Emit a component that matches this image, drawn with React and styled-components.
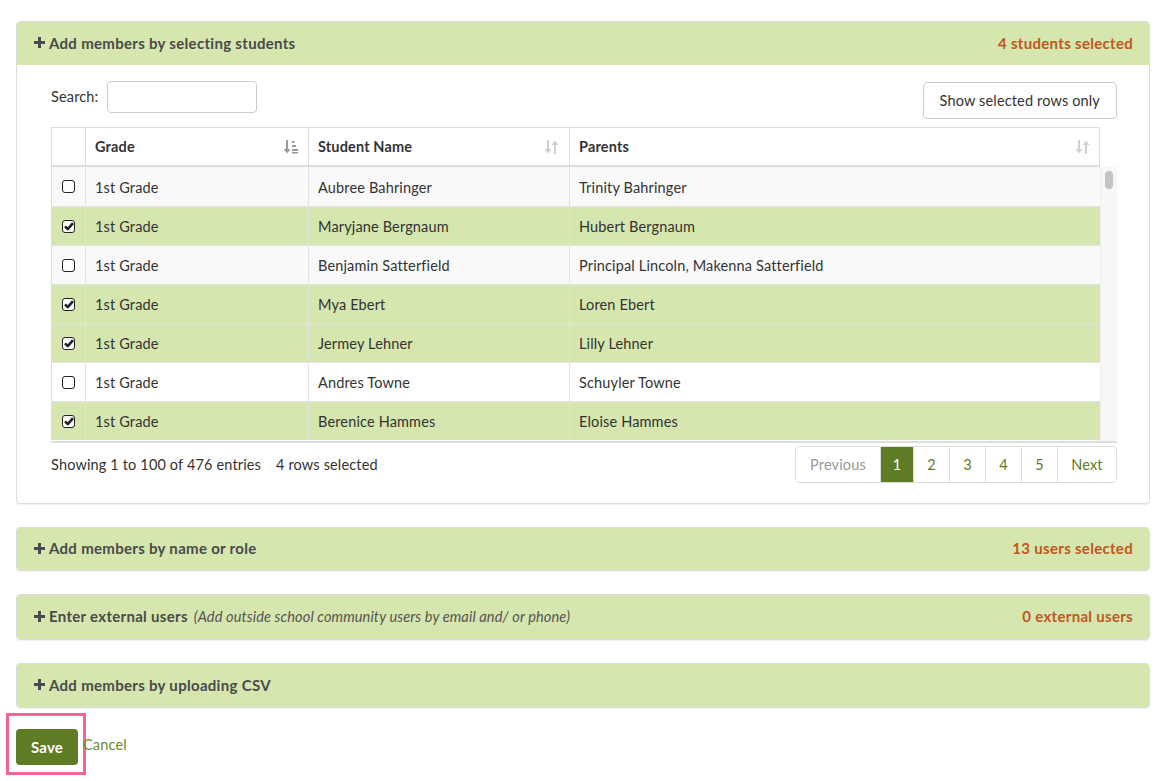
import React from "react";
import styled, { createGlobalStyle } from "styled-components";

const Global = createGlobalStyle`
  html, body { margin: 0; padding: 0; background: #fff; }
  body { font-family: Lato, "Open Sans", sans-serif; color: #333; font-size: 14.5px; letter-spacing: 0.15px; }
  * { box-sizing: border-box; }
`;

const Page = styled.div`
  padding: 21px 16px 0 16px;
  width: 1166px;
  display: flex;
  flex-direction: column;
  gap: 23px;
`;

const Panel = styled.section`
  border: 1px solid #dcdcdc;
  border-radius: 4px;
  background: #fff;
  overflow: hidden;
  box-shadow: 0 1px 1px rgba(0,0,0,0.06);
`;

const PanelHeader = styled.div`
  height: ${p => p.$h || 43}px;
  background: #d5e6ae;
  display: flex;
  align-items: center;
  justify-content: space-between;
  padding: 0 16px 0 17px;
  font-weight: 700;
  font-size: 15px;
  letter-spacing: 0.3px;
  color: #4a4a4a;
`;

const Title = styled.div`
  display: flex;
  align-items: center;
  gap: 4px;
  margin-top: -2px;
`;

const Hint = styled.span`
  font-style: italic;
  font-weight: 400;
  font-size: 14.6px;
  letter-spacing: 0.1px;
  color: #555;
  margin-left: 2px;
`;

const Count = styled.div`
  color: #c0581e;
  font-weight: 700;
  margin-top: -2px;
`;

const Body = styled.div`
  padding: 16px 32px 20px 34px;
`;

const TopBar = styled.div`
  display: flex;
  justify-content: space-between;
  align-items: flex-start;
  margin-bottom: 8px;
`;

const SearchLabel = styled.label`
  display: flex;
  align-items: center;
  gap: 9px;
  color: #333;
  margin-top: -2px;
`;

const SearchInput = styled.input`
  width: 150px;
  height: 32px;
  margin-top: 2px;
  border: 1px solid #ccc;
  border-radius: 4px;
  font: inherit;
  padding: 0 8px;
`;

const GhostButton = styled.button`
  height: 37px;
  margin-top: 1px;
  padding: 0 16px;
  border: 1px solid #ccc;
  border-radius: 4px;
  background: #fff;
  font-family: inherit;
  font-size: 14.5px;
  letter-spacing: 0.15px;
  color: #333;
`;

const TableWrap = styled.div`
  width: 1066px;
`;

const Grid = styled.div`
  display: grid;
  grid-template-columns: 34px 223px 261px 531px;
  width: 1049px;
`;

const HeadRow = styled(Grid)`
  border-top: 1px solid #ddd;
  border-right: 1px solid #ddd;
  border-bottom: 2px solid #ddd;
  height: 40px;
`;

const HeadCell = styled.div`
  display: flex;
  align-items: center;
  justify-content: space-between;
  padding: 0 9px;
  font-weight: 700;
  color: #333;
  border-left: 1px solid #ddd;
`;

const ScrollBody = styled.div`
  height: 276px;
  display: flex;
  border-bottom: 2px solid #ddd;
  overflow: hidden;
`;

const Rows = styled.div`
  width: 1049px;
  display: flex;
  flex-direction: column;
`;

const ScrollTrack = styled.div`
  width: 17px;
  background: #f7f7f7;
  border-left: 1px solid #efefef;
  padding: 4px 4px 0 4px;
`;

const ScrollThumb = styled.div`
  height: 18px;
  background: #c4c4c4;
  border-radius: 5px;
`;

const Row = styled(Grid)`
  height: 39px;
  flex: none;
  background: ${p => (p.$sel ? "#d5e6ae" : p.$odd ? "#f9f9f9" : "#fff")};
  border-top: ${p => (p.$first ? "0" : "1px solid #e4e4e4")};
`;

const Cell = styled.div`
  display: flex;
  align-items: center;
  padding: 1px 9px 0;
  color: #333;
  border-left: 1px solid #e2e2e2;
  white-space: nowrap;
  &:first-child { border-left: 1px solid #ddd; justify-content: center; padding: 0; }
`;

const Box = styled.span`
  width: 13px;
  height: 13px;
  border: 1.7px solid #222;
  border-radius: 3px;
  background: #fff;
  display: inline-flex;
  align-items: center;
  justify-content: center;
`;

const Footer = styled.div`
  display: flex;
  justify-content: space-between;
  align-items: flex-start;
  margin-top: 3px;
`;

const Info = styled.div`
  color: #333;
  padding-top: 10px;
  display: flex;
  gap: 15px;
`;

const Pager = styled.div`
  display: flex;
  border: 1px solid #ddd;
  border-radius: 4px;
  height: 37px;
  overflow: hidden;
`;

const PageBtn = styled.button`
  border: 0;
  border-left: ${p => (p.$first ? "0" : "1px solid #ddd")};
  background: ${p => (p.$active ? "#5f7b24" : "#fff")};
  color: ${p => (p.$active ? "#fff" : p.$disabled ? "#999" : "#5f7b24")};
  font-family: inherit;
  font-size: 14.5px;
  letter-spacing: 0.15px;
  width: ${p => p.$w}px;
  padding: 0;
`;

const Actions = styled.div`
  display: flex;
  align-items: center;
  margin-top: -18px;
  margin-left: -10px;
`;

const Highlight = styled.div`
  border: 3px solid #f06595;
  padding: 13px 5px 7px 7px;
`;

const SaveButton = styled.button`
  background: #5f7b24;
  color: #fff;
  border: 0;
  border-radius: 4px;
  height: 36px;
  width: 62px;
  font-family: inherit;
  font-weight: 700;
  font-size: 15px;
  letter-spacing: 0.2px;
`;

const CancelLink = styled.a`
  color: #6b8a2c;
  text-decoration: none;
  margin-left: -3px;
  margin-top: 1px;
`;

const PlusIcon = () => (
  <svg width="11" height="11" viewBox="0 0 11 11">
    <path d="M4 0h3v4h4v3H7v4H4V7H0V4h4z" fill="#4a4a4a" />
  </svg>
);

const SortIcon = ({ active }) =>
  active ? (
    <svg width="16" height="16" viewBox="0 0 16 16">
      <g fill="#9a9a9a">
        <rect x="3" y="1" width="2" height="10" />
        <path d="M0.5 10 L7.5 10 L4 14.5 Z" />
        <rect x="9" y="2" width="2.5" height="2" />
        <rect x="9" y="6" width="4" height="2" />
        <rect x="9" y="10" width="6" height="2" />
        <rect x="9" y="13" width="6" height="1.5" />
      </g>
    </svg>
  ) : (
    <svg width="16" height="16" viewBox="0 0 16 16">
      <g fill="#d0d0d0">
        <rect x="3" y="1" width="2" height="10" />
        <path d="M0.5 10 L7.5 10 L4 14.5 Z" />
        <rect x="10" y="5" width="2" height="10" />
        <path d="M7.5 6 L14.5 6 L11 1.5 Z" />
      </g>
    </svg>
  );

const Check = ({ on }) => (
  <Box>
    {on && (
      <svg width="10" height="9" viewBox="0 0 10 9">
        <path d="M1 4.3 L3.8 7.1 L9 1.2" stroke="#222" strokeWidth="2.6" fill="none" strokeLinejoin="round" />
      </svg>
    )}
  </Box>
);

const rows = [
  { name: "Aubree Bahringer", parents: "Trinity Bahringer", sel: false },
  { name: "Maryjane Bergnaum", parents: "Hubert Bergnaum", sel: true },
  { name: "Benjamin Satterfield", parents: "Principal Lincoln, Makenna Satterfield", sel: false },
  { name: "Mya Ebert", parents: "Loren Ebert", sel: true },
  { name: "Jermey Lehner", parents: "Lilly Lehner", sel: true },
  { name: "Andres Towne", parents: "Schuyler Towne", sel: false },
  { name: "Berenice Hammes", parents: "Eloise Hammes", sel: true },
];

const Section = ({ title, hint, count, h }) => (
  <Panel>
    <PanelHeader $h={h}>
      <Title>
        <PlusIcon />
        <span>{title}</span>
        {hint && <Hint>{hint}</Hint>}
      </Title>
      {count && <Count>{count}</Count>}
    </PanelHeader>
  </Panel>
);

export default function App() {
  return (
    <>
      <Global />
      <Page>
        <Panel>
          <PanelHeader>
            <Title>
              <PlusIcon />
              <span>Add members by selecting students</span>
            </Title>
            <Count>4 students selected</Count>
          </PanelHeader>
          <Body>
            <TopBar>
              <SearchLabel>
                Search:
                <SearchInput type="text" />
              </SearchLabel>
              <GhostButton>Show selected rows only</GhostButton>
            </TopBar>
            <TableWrap>
              <HeadRow>
                <HeadCell />
                <HeadCell>
                  Grade <SortIcon active />
                </HeadCell>
                <HeadCell>
                  Student Name <SortIcon />
                </HeadCell>
                <HeadCell>
                  Parents <SortIcon />
                </HeadCell>
              </HeadRow>
              <ScrollBody>
                <Rows>
                  {rows.map((r, i) => (
                    <Row key={i} $sel={r.sel} $odd={i % 2 === 0} $first={i === 0}>
                      <Cell>
                        <Check on={r.sel} />
                      </Cell>
                      <Cell>1st Grade</Cell>
                      <Cell>{r.name}</Cell>
                      <Cell>{r.parents}</Cell>
                    </Row>
                  ))}
                </Rows>
                <ScrollTrack>
                  <ScrollThumb />
                </ScrollTrack>
              </ScrollBody>
            </TableWrap>
            <Footer>
              <Info>
                <span>Showing 1 to 100 of 476 entries</span>
                <span>4 rows selected</span>
              </Info>
              <Pager>
                <PageBtn $first $disabled $w={84}>Previous</PageBtn>
                <PageBtn $active $w={33}>1</PageBtn>
                <PageBtn $w={36}>2</PageBtn>
                <PageBtn $w={36}>3</PageBtn>
                <PageBtn $w={36}>4</PageBtn>
                <PageBtn $w={36}>5</PageBtn>
                <PageBtn $w={59}>Next</PageBtn>
              </Pager>
            </Footer>
          </Body>
        </Panel>
        <Section title="Add members by name or role" count="13 users selected" h={42} />
        <Section
          title="Enter external users"
          hint="(Add outside school community users by email and/ or phone)"
          count="0 external users"
          h={44}
        />
        <Section title="Add members by uploading CSV" />
        <Actions>
          <Highlight>
            <SaveButton>Save</SaveButton>
          </Highlight>
          <CancelLink href="#">Cancel</CancelLink>
        </Actions>
      </Page>
    </>
  );
}
